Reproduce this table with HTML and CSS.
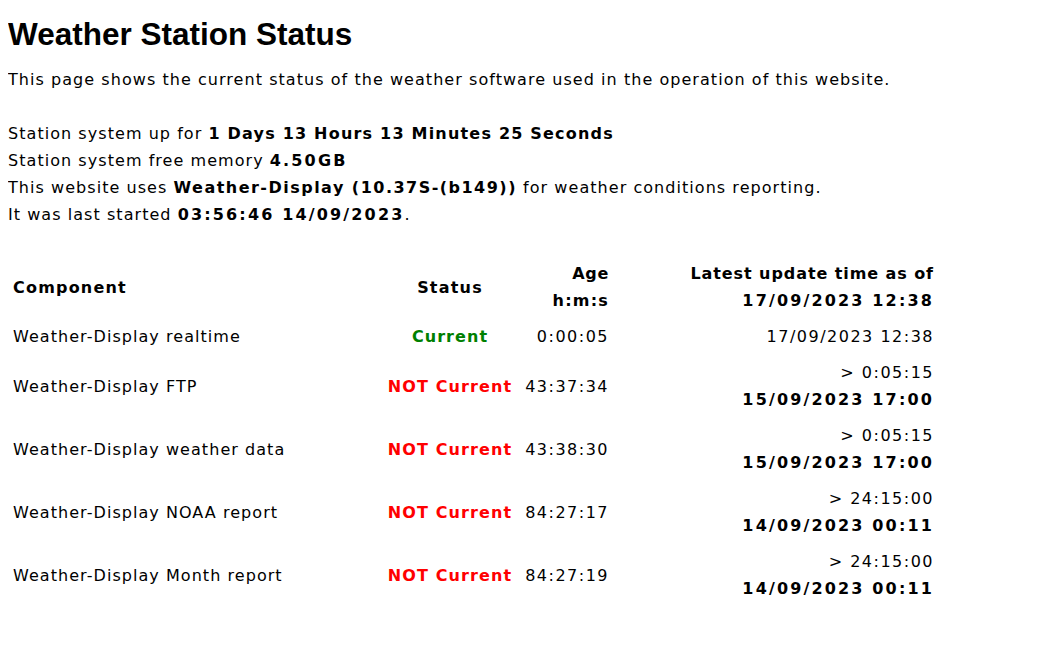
FILE: index.html
```html
<!DOCTYPE html>
<html>
<head>
<meta charset="utf-8">
<title>Weather Station Status</title>
<link rel="stylesheet" href="styles.css">
</head>
<body>
<h1 class="title">Weather Station Status</h1>
<p class="intro">This page shows the current status of the weather software used in the operation of this website.</p>
<p class="info">
Station system up for <b>1 Days 13 Hours 13 Minutes 25 Seconds</b><br>
Station system free memory <b class="num">4.50GB</b><br>
This website uses <b class="ver">Weather-Display (10.37S-(b149))</b> for weather conditions reporting.<br>
It was last started <b class="num">03:56:46 14/09/2023</b>.
</p>
<table class="status">
<colgroup>
<col class="c-comp"><col class="c-status"><col class="c-age"><col class="c-latest">
</colgroup>
<thead>
<tr>
<th class="left">Component</th>
<th class="center">Status</th>
<th class="right"><span class="age">Age</span><br>h:m:s</th>
<th class="right"><span class="hdr">Latest update time as of</span><br><span class="num">17/09/2023 12:38</span></th>
</tr>
</thead>
<tbody>
<tr>
<td>Weather-Display realtime</td>
<td class="center ok">Current</td>
<td class="right num">0:00:05</td>
<td class="right num">17/09/2023 12:38</td>
</tr>
<tr>
<td>Weather-Display FTP</td>
<td class="center bad">NOT Current</td>
<td class="right num">43:37:34</td>
<td class="right num">&gt; 0:05:15<br><b>15/09/2023 17:00</b></td>
</tr>
<tr>
<td>Weather-Display weather data</td>
<td class="center bad">NOT Current</td>
<td class="right num">43:38:30</td>
<td class="right num">&gt; 0:05:15<br><b>15/09/2023 17:00</b></td>
</tr>
<tr>
<td>Weather-Display NOAA report</td>
<td class="center bad">NOT Current</td>
<td class="right num">84:27:17</td>
<td class="right num">&gt; 24:15:00<br><b>14/09/2023 00:11</b></td>
</tr>
<tr>
<td>Weather-Display Month report</td>
<td class="center bad">NOT Current</td>
<td class="right num">84:27:19</td>
<td class="right num">&gt; 24:15:00<br><b>14/09/2023 00:11</b></td>
</tr>
</tbody>
</table>
</body>
</html>
```
FILE: styles.css
```css
html, body {
  background: #ffffff;
}
body {
  margin: 8px;
  color: #000000;
  font-family: "DejaVu Sans", Verdana, sans-serif;
  font-size: 16px;
  line-height: 27px;
  letter-spacing: 1.05px;
}
b, th {
  letter-spacing: 1.2px;
}
.num {
  letter-spacing: 1.5px;
}
b.num, .num b, th .num {
  letter-spacing: 2.15px;
}
.ver {
  letter-spacing: 1.48px;
}
.title {
  font-family: "Liberation Sans", Arial, sans-serif;
  font-size: 31.5px;
  font-weight: bold;
  line-height: 37px;
  letter-spacing: 0;
  margin: 8px 0 0 0;
}
.intro {
  margin: 13px 0 0 0;
}
.info {
  margin: 27px 0 0 0;
}
.status {
  margin-top: 27px;
  border-collapse: separate;
  border-spacing: 0 1px;
  table-layout: fixed;
  width: 929px;
}
.c-comp { width: 374px; }
.c-status { width: 136px; }
.c-age { width: 94px; }
.c-latest { width: 325px; }
.status th, .status td {
  padding: 4px 5px;
  vertical-align: middle;
  white-space: nowrap;
}
.status th {
  font-weight: bold;
}
.status .right {
  padding-right: 3px;
}
.age { letter-spacing: 0.67px; }
.hdr { letter-spacing: 0.92px; }
.left { text-align: left; }
.center { text-align: center; }
.right { text-align: right; }
.ok { color: #008000; font-weight: bold; }
.bad { color: #ff0000; font-weight: bold; letter-spacing: 1.1px; }
```
